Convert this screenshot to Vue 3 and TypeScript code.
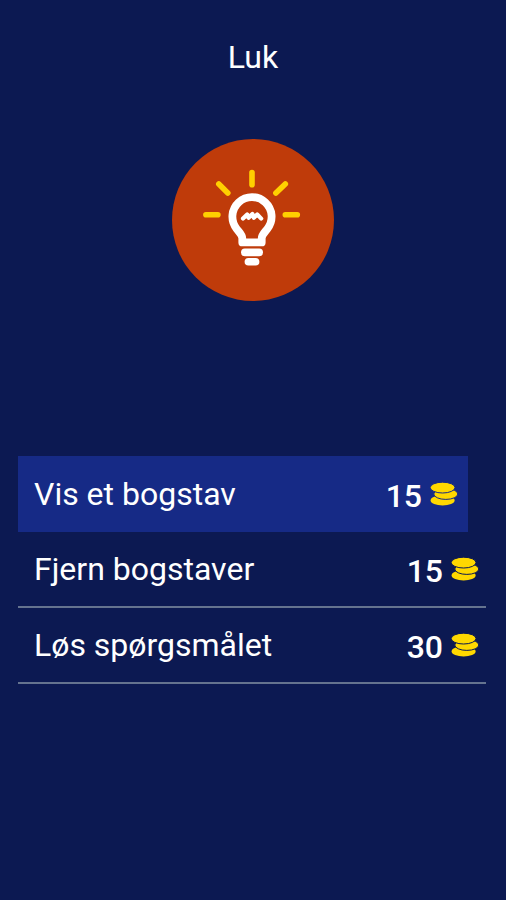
<script setup lang="ts">
import { ref } from 'vue'

interface Hint {
  id: string
  label: string
  price: number
}

const hints: Hint[] = [
  { id: 'reveal', label: 'Vis et bogstav', price: 15 },
  { id: 'remove', label: 'Fjern bogstaver', price: 15 },
  { id: 'solve', label: 'Løs spørgsmålet', price: 30 },
]

const selected = ref<string>('reveal')
</script>

<template>
  <main class="screen">
    <button class="close" type="button">Luk</button>

    <svg class="bulb" viewBox="0 0 162 162" aria-hidden="true">
      <circle cx="81" cy="81" r="81" fill="#bf3b0a" />
      <g fill="none" stroke="#ffd000" stroke-width="5.6" stroke-linecap="round">
        <path d="M80 33.6V45.8M46.8 45L55.8 54M113.3 45L103.9 54M33.9 75.8H45.9M113.3 75.8H125.3" />
      </g>
      <path
        d="M70.3 103.4V99.5C70.3 95.5 66.8 93 64.6 89.8A19.6 19.6 0 1 1 95.4 89.8C93.2 93 89.7 95.5 89.7 99.5V103.4Z"
        fill="none"
        stroke="#fff"
        stroke-width="7.8"
        stroke-linejoin="round"
      />
      <path
        d="M71 79.6L75.2 75.4L76.6 78.8L80.4 75L81.8 78.8L85.2 75.4L89.2 79.6"
        fill="none"
        stroke="#fff"
        stroke-width="4.2"
        stroke-linecap="round"
        stroke-linejoin="round"
      />
      <rect x="69" y="109.6" width="22" height="7.6" rx="3.8" fill="#fff" />
      <rect x="72.6" y="119" width="14.8" height="7.6" rx="3.8" fill="#fff" />
    </svg>

    <ul class="hints">
      <li v-for="hint in hints" :key="hint.id">
        <button
          class="hint"
          :class="{ selected: hint.id === selected }"
          type="button"
          @click="selected = hint.id"
        >
          <span class="label">{{ hint.label }}</span>
          <span class="price">{{ hint.price }}</span>
          <svg class="coins" viewBox="0 0 28 24" aria-hidden="true">
            <ellipse cx="12.6" cy="18.4" rx="12" ry="5" />
            <ellipse class="edge" cx="15.8" cy="12" rx="12" ry="5.4" />
            <ellipse class="edge" cx="12.6" cy="5.6" rx="12.4" ry="5.4" />
          </svg>
        </button>
      </li>
    </ul>
  </main>
</template>

<style>
body {
  margin: 0;
  background: #0c1952;
}
</style>

<style scoped>
.screen {
  display: flex;
  flex-direction: column;
  align-items: center;
  box-sizing: border-box;
  min-height: 100vh;
  padding: 37px 18px 36px;
  background: #0c1952;
  color: #fff;
  font-family: Roboto, "Liberation Sans", sans-serif;
}

button {
  margin: 0;
  padding: 0;
  border: 0;
  background: none;
  color: inherit;
  font: inherit;
  cursor: pointer;
}

.close {
  font-size: 32px;
  line-height: 40px;
}

.bulb {
  width: 162px;
  height: 162px;
  margin-top: 62px;
}

.hints {
  align-self: stretch;
  margin: 155px 2px 0 0;
  padding: 0;
  list-style: none;
}

.hint {
  display: flex;
  align-items: center;
  box-sizing: border-box;
  width: 100%;
  height: 76px;
  padding: 0 7px 0 16px;
  border-bottom: 2px solid #65738f;
  font-size: 32px;
  line-height: 40px;
  text-align: left;
}

.hint.selected {
  width: calc(100% - 18px);
  padding-right: 10px;
  border-bottom: 0;
  background: #162a86;
}

.label {
  flex: 1;
}

.price {
  padding-top: 4px;
  font-weight: 500;
}

.coins {
  width: 28px;
  height: 24px;
  margin-left: 8px;
  fill: #ffd800;
}

.edge {
  stroke: #0c1952;
  stroke-width: 1;
}

.selected .edge {
  stroke: #162a86;
}
</style>
